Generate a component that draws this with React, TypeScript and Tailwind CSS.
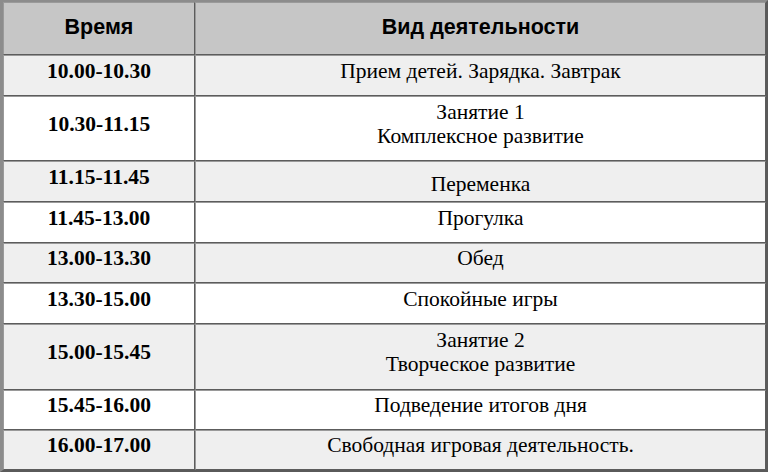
import React from "react";

const rows: { time: string; lines: string[]; h: string; shift?: boolean; alt: boolean }[] = [
  { time: "10.00-10.30", lines: ["Прием детей. Зарядка. Завтрак"], h: "h-[41px]", alt: true },
  { time: "10.30-11.15", lines: ["Занятие 1", "Комплексное развитие"], h: "h-[65px]", alt: false },
  { time: "11.15-11.45", lines: ["Переменка"], h: "h-[41px]", shift: true, alt: true },
  { time: "11.45-13.00", lines: ["Прогулка"], h: "h-[41px]", alt: false },
  { time: "13.00-13.30", lines: ["Обед"], h: "h-[40px]", alt: true },
  { time: "13.30-15.00", lines: ["Спокойные игры"], h: "h-[41px]", alt: false },
  { time: "15.00-15.45", lines: ["Занятие 2", "Творческое развитие"], h: "h-[66px]", alt: true },
  { time: "15.45-16.00", lines: ["Подведение итогов дня"], h: "h-[40px]", alt: false },
  { time: "16.00-17.00", lines: ["Свободная игровая деятельность."], h: "h-[40px]", alt: true },
];

const cell =
  "border-t border-t-[#9a9a9a] border-l border-l-[#9a9a9a] border-b border-b-[#5c5c5c] border-r border-r-[#5c5c5c]";

export default function App() {
  return (
    <div className="w-[768px] h-[473px] bg-white">
      <div className="w-[768px] border-t-2 border-l-[3px] border-t-[#8c8c8c] border-l-[#8c8c8c] border-r-2 border-b-2 border-r-[#5a5a5a] border-b-[#5a5a5a]">
        {/* header */}
        <div className="flex h-[53px] bg-[#c6c6c6]">
          <div className={`${cell} w-[192px] flex items-center justify-center font-['Liberation_Sans',Arial,sans-serif] font-bold text-[21.5px] text-black pb-[2px]`}>
            Время
          </div>
          <div className={`${cell} flex-1 flex items-center justify-center font-['Liberation_Sans',Arial,sans-serif] font-bold text-[21.5px] text-black pb-[2px]`}>
            Вид деятельности
          </div>
        </div>

        {rows.map((r, i) => (
          <div key={i} className={`flex ${r.h} ${r.alt ? "bg-[#efefef]" : "bg-white"}`}>
            <div className={`${cell} w-[192px] flex items-center justify-center pb-[10px] font-['Liberation_Serif','Times_New_Roman',serif] font-bold text-[21.5px] leading-[24px] text-black`}>
              {r.time}
            </div>
            <div
              className={`${cell} flex-1 flex flex-col ${r.shift ? "justify-start pt-[10px]" : "justify-center pb-[10px]"} items-center font-['Liberation_Serif','Times_New_Roman',serif] text-[21.5px] leading-[24px] text-black`}
            >
              {r.lines.map((l, j) => (
                <div key={j}>{l}</div>
              ))}
            </div>
          </div>
        ))}
      </div>
    </div>
  );
}
